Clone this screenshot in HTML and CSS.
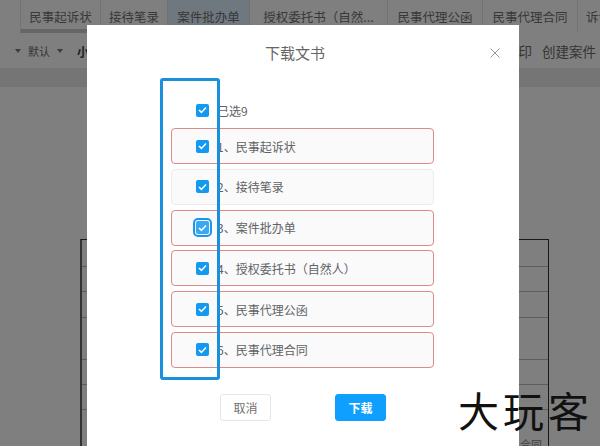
FILE: index.html
```html
<!DOCTYPE html>
<html lang="zh">
<head>
<meta charset="utf-8">
<title>下载文书</title>
<link rel="stylesheet" href="styles.css">
</head>
<body>
<div class="app">
  <nav class="tabs">
    <div class="tab tab-current">民事起诉状</div>
    <div class="tab">接待笔录</div>
    <div class="tab tab-active">案件批办单</div>
    <div class="tab tab-long">授权委托书（自然...</div>
    <div class="tab tab-wide">民事代理公函</div>
    <div class="tab tab-wide">民事代理合同</div>
    <div class="tab">诉讼</div>
  </nav>
  <div class="toolbar">
    <div class="tools-left"><span class="caret"></span><span>默认</span><span class="caret"></span><b>小</b></div>
    <div class="tools-right"><span>打印</span><span>创建案件</span></div>
  </div>
  <div class="ruler"></div>
  <main class="sheet">
    <div class="table">
      <div class="tr tr-1"></div>
      <div class="tr tr-2"></div>
      <div class="tr tr-3"></div>
      <div class="tr tr-4"></div>
      <div class="tr tr-5"></div>
      <div class="tr tr-6"></div>
      <div class="tr-note">合同</div>
    </div>
  </main>
</div>
<div class="backdrop"></div>
<section class="modal">
  <header class="modal-head">
    <h2 class="modal-title">下载文书</h2>
    <svg class="close" width="10" height="10" viewBox="0 0 10 10"><path d="M.5.5l9 9M9.500.5l-9 9" fill="none" stroke="#999" stroke-width="1"/></svg>
  </header>
  <div class="list">
    <label class="item item-all"><span class="check"><svg width="9" height="8" viewBox="0 0 9 8"><path d="M1 4l2.400 2.400L8 1.400" fill="none" stroke="#fff" stroke-width="1.500"/></svg></span>已选9</label>
    <label class="item item-error"><span class="check"><svg width="9" height="8" viewBox="0 0 9 8"><path d="M1 4l2.400 2.400L8 1.400" fill="none" stroke="#fff" stroke-width="1.500"/></svg></span>1、民事起诉状</label>
    <label class="item item-plain"><span class="check"><svg width="9" height="8" viewBox="0 0 9 8"><path d="M1 4l2.400 2.400L8 1.400" fill="none" stroke="#fff" stroke-width="1.500"/></svg></span>2、接待笔录</label>
    <label class="item item-error"><span class="check check-focus"><svg width="9" height="8" viewBox="0 0 9 8"><path d="M1 4l2.400 2.400L8 1.400" fill="none" stroke="#fff" stroke-width="1.500"/></svg></span>3、案件批办单</label>
    <label class="item item-error"><span class="check"><svg width="9" height="8" viewBox="0 0 9 8"><path d="M1 4l2.400 2.400L8 1.400" fill="none" stroke="#fff" stroke-width="1.500"/></svg></span>4、授权委托书（自然人）</label>
    <label class="item item-error"><span class="check"><svg width="9" height="8" viewBox="0 0 9 8"><path d="M1 4l2.400 2.400L8 1.400" fill="none" stroke="#fff" stroke-width="1.500"/></svg></span>5、民事代理公函</label>
    <label class="item item-error"><span class="check"><svg width="9" height="8" viewBox="0 0 9 8"><path d="M1 4l2.400 2.400L8 1.400" fill="none" stroke="#fff" stroke-width="1.500"/></svg></span>6、民事代理合同</label>
  </div>
  <footer class="modal-foot">
    <button class="btn btn-cancel" type="button">取消</button>
    <button class="btn btn-primary" type="button">下载</button>
  </footer>
  <div class="annotation"></div>
</section>
<div class="watermark">大玩客</div>
</body>
</html>
```
FILE: styles.css
```css
* { box-sizing: border-box; }
html, body { margin: 0; height: 100%; }
body {
  position: relative;
  width: 600px;
  height: 446px;
  overflow: hidden;
  background: #fff;
  font-family: "Noto Sans CJK SC", "Noto Sans", sans-serif;
  color: #606266;
}
.app { display: flex; flex-direction: column; height: 446px; }

.tabs { display: flex; height: 36px; padding-left: 20px; flex: none; overflow: hidden; }
.tab {
  flex: none;
  padding: 0 8px;
  height: 33px;
  line-height: 34px;
  font-size: 12.5px;
  text-align: center;
  color: #707070;
  border-left: 1px solid #e4e4e4;
  white-space: nowrap;
  background: #fff;
}
.tab-current { width: 80px; border-bottom: 4px solid #ccc; }
.tab-active { width: 82px; background: #deeeff; }
.tab-long { width: 138px; }
.tab-wide { width: 95px; }

.toolbar {
  display: flex;
  justify-content: space-between;
  align-items: center;
  height: 32px;
  flex: none;
  padding: 0 4px 2px 15px;
  font-size: 12px;
  color: #6a6a6a;
}
.tools-left { display: flex; align-items: center; gap: 7px; font-size: 11px; }
.tools-left b { margin-left: 7px; font-size: 12px; color: #444; }
.caret { width: 0; height: 0; border: 3px solid transparent; border-top: 4px solid #777; border-bottom: 0; }
.tools-right { display: flex; gap: 10px; font-size: 13.5px; }

.ruler { height: 19px; flex: none; background: #ebebeb; }

.sheet { flex: 1; padding: 152px 51px 0 80px; overflow: hidden; }
.table { border-left: 2px solid #666; border-right: 1px solid #333; border-top: 1px solid #333; height: 230px; }
.tr { border-bottom: 1px solid #bbb; }
.tr-1 { height: 27px; }
.tr-2 { height: 25px; }
.tr-3 { height: 26px; }
.tr-4 { height: 42px; }
.tr-5 { height: 25px; }
.tr-6 { height: 25px; }
.tr-note { margin: 28px 0 0 438px; font-size: 11px; line-height: 12px; color: #888; white-space: nowrap; }

.backdrop { position: absolute; inset: 0; background: rgba(0, 0, 0, .5); }

.modal {
  position: absolute;
  left: 87px;
  top: 25px;
  width: 432px;
  height: 421px;
  background: #fff;
  overflow: hidden;
}
.modal-head { display: flex; align-items: center; height: 67px; padding: 0 19px 11px 178px; }
.modal-title { margin: 0; font-size: 15px; line-height: 22px; font-weight: 400; color: #666; }
.close { margin-left: auto; }

.list { display: flex; flex-direction: column; gap: 4.8px; padding-left: 84px; }
.item {
  display: flex;
  align-items: center;
  gap: 8px;
  width: 263px;
  height: 36px;
  padding-left: 24px;
  font-size: 12px;
  color: #606266;
  border: 1px solid transparent;
  border-radius: 4px;
  background: #fafafa;
}
.item-all { background: none; margin-bottom: -4.8px; }
.item-error { border-color: #dc8a8a; }
.item-plain { border-color: #ececec; }
.check {
  flex: none;
  display: flex;
  align-items: center;
  justify-content: center;
  width: 13px;
  height: 13px;
  border-radius: 2px;
  background: #1499f2;
}
.check-focus { outline: 2px solid #1499f2; outline-offset: 1px; background: #3aa7f0; }

.modal-foot { display: flex; gap: 64px; padding: 26px 0 0 133px; }
.btn {
  width: 51px;
  height: 27px;
  padding: 0;
  font: 12px "Noto Sans CJK SC", "Noto Sans", sans-serif;
  border-radius: 3px;
  border: 1px solid #e6e6e6;
  background: #fff;
  color: #707070;
}
.btn-primary { border-color: #0f9fff; background: #0f9fff; color: #fff; font-weight: 700; }

.annotation {
  position: absolute;
  left: 73px;
  top: 53px;
  width: 60px;
  height: 302px;
  border: 3px solid #1a8fdc;
  border-radius: 3px;
}

.watermark {
  position: absolute;
  left: 458px;
  top: 389px;
  font-size: 41px;
  line-height: 41px;
  letter-spacing: 4px;
  color: #111;
  white-space: nowrap;
}
```
